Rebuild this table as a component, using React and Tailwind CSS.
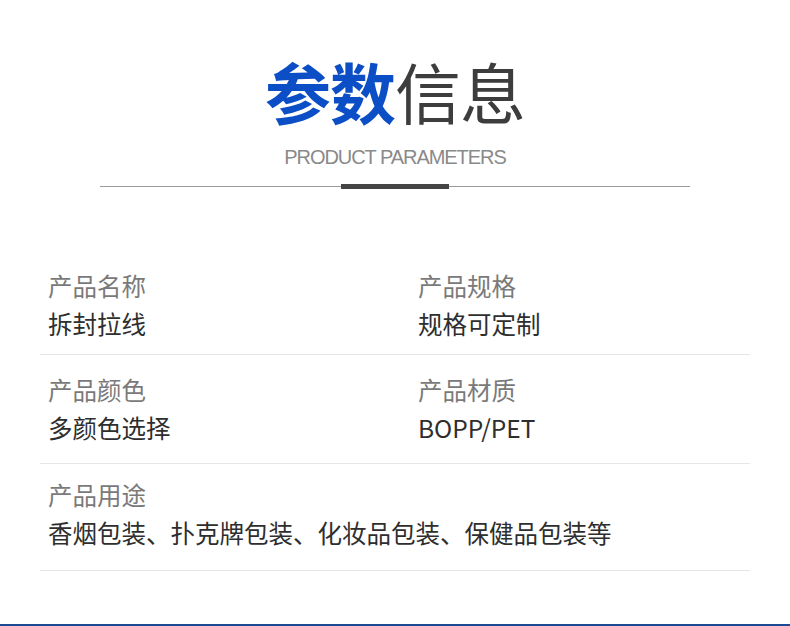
export default function App() {
  const font = { fontFamily: '"Noto Sans CJK SC", "Noto Sans", sans-serif' };
  const rows = [
    {
      items: [
        { label: "产品名称", value: "拆封拉线" },
        { label: "产品规格", value: "规格可定制" },
      ],
      cls: "pt-[0px] pb-[11px]",
    },
    {
      items: [
        { label: "产品颜色", value: "多颜色选择" },
        { label: "产品材质", value: "BOPP/PET" },
      ],
      cls: "pt-[16px] pb-[16px]",
    },
    {
      items: [{ label: "产品用途", value: "香烟包装、扑克牌包装、化妆品包装、保健品包装等" }],
      cls: "pt-[12px] pb-[18px]",
    },
  ];
  return (
    <div
      className="w-[790px] h-[626px] bg-white flex flex-col border-b-2 border-[#1b4a94]"
      style={font}
    >
      <div className="pt-[47px] flex flex-col items-center">
        <div className="text-[66px] leading-[86px] tracking-[-1px] whitespace-nowrap">
          <span className="font-bold text-[#0b4ec6]">参数</span>
          <span className="font-normal text-[#3d3d3d]">信息</span>
        </div>
        <div
          className="mt-[12px] text-[20px] leading-[24px] tracking-[-1.05px] text-[#8a8a8a]"
          style={{ fontFamily: '"Liberation Sans", Arial, sans-serif' }}
        >
          PRODUCT PARAMETERS
        </div>
      </div>
      <div className="mt-[15px] mx-[100px] relative h-[5px] flex items-center justify-center">
        <div className="absolute left-0 right-0 top-[2px] h-px bg-[#9a9a9a]" />
        <div className="relative w-[108px] h-[5px] bg-[#444444]" />
      </div>
      <div className="mt-[78px] mx-[40px] flex flex-col">
        {rows.map((row, i) => (
          <div
            key={i}
            className={`grid grid-cols-[370px_1fr] px-[8px] border-b border-[#e6e6e6] ${row.cls}`}
          >
            {row.items.map((it, j) => (
              <div key={j} className={row.items.length === 1 ? "col-span-2" : ""}>
                <div className="text-[24.5px] leading-[38px] text-[#7a7a7a] whitespace-nowrap">
                  {it.label}
                </div>
                <div className="text-[24.5px] leading-[38px] font-normal text-[#2e2e2e] whitespace-nowrap">
                  {it.value}
                </div>
              </div>
            ))}
          </div>
        ))}
      </div>
    </div>
  );
}
